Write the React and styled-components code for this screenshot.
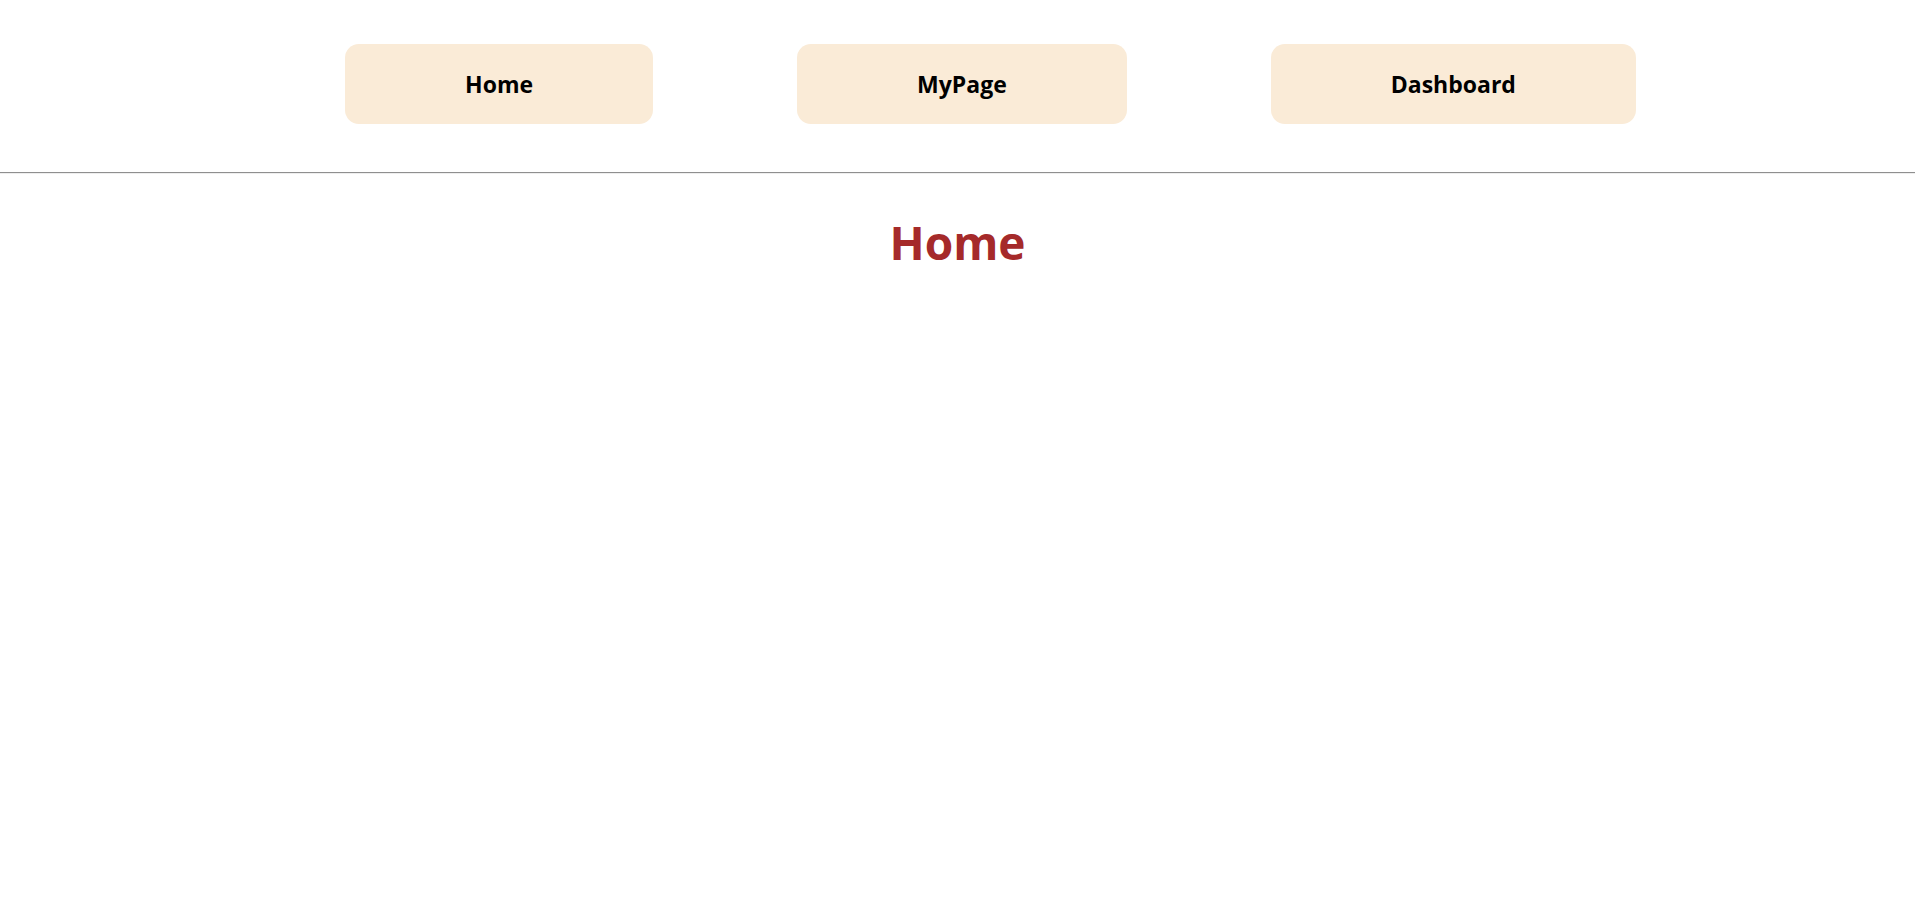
import React from 'react';
import styled, { createGlobalStyle } from 'styled-components';

const GlobalStyle = createGlobalStyle`
    body {
        margin: 0;
        background: #fff;
        font-family: "Open Sans", "Noto Sans", sans-serif;
    }
`

const Nav = styled.nav`
    display: flex;
    justify-content: center;
    gap: 144px;
    padding: 44px 0 48px 66px;
`

const NavButton = styled.a`
    display: flex;
    align-items: center;
    justify-content: center;
    height: 80px;
    padding: 0 120px;
    box-sizing: border-box;
    background: #faebd7;
    border-radius: 14px;
    color: #000;
    font-size: 23px;
    font-weight: 700;
    text-decoration: none;
    cursor: pointer;
`

const Divider = styled.hr`
    margin: 0;
    border: 0;
    border-top: 1px solid #8f8f8f;
    border-bottom: 1px solid #eeeeee;
`

const Title = styled.h1`
    margin: 41px 0 0;
    text-align: center;
    color: #a52a2a;
    font-size: 46px;
    font-weight: 700;
    line-height: 1.2;
`

const links = ['Home', 'MyPage', 'Dashboard'];

const App = () => {
    return (
        <>
            <GlobalStyle />
            <Nav>
                {links.map(link => (
                    <NavButton key={link}>{link}</NavButton>
                ))}
            </Nav>
            <Divider />
            <Title>Home</Title>
        </>
    )
}

export default App
